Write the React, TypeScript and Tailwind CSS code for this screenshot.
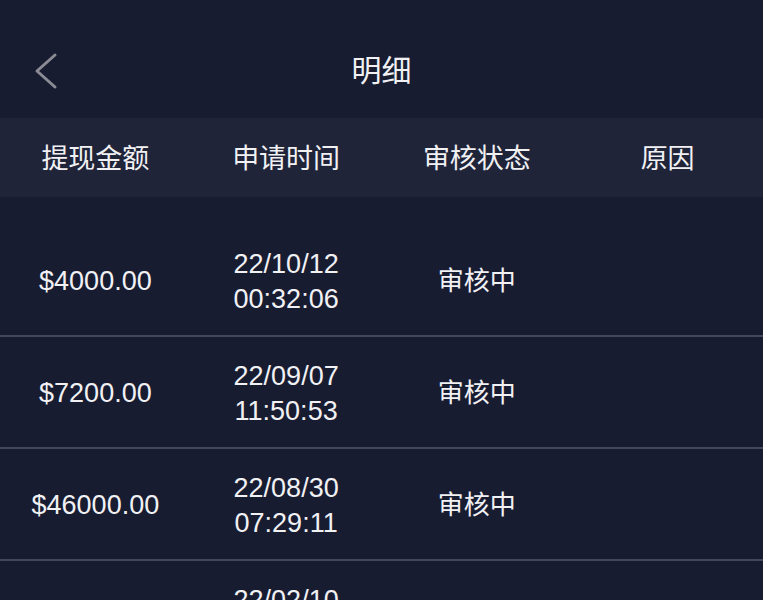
const rows = [
  { amount: '$4000.00', date: '22/10/12', time: '00:32:06', status: '审核中' },
  { amount: '$7200.00', date: '22/09/07', time: '11:50:53', status: '审核中' },
  { amount: '$46000.00', date: '22/08/30', time: '07:29:11', status: '审核中' },
  { amount: '$3000.00', date: '22/02/10', time: '09:15:40', status: '审核中' },
]

export default function App() {
  return (
    <div className="min-h-screen h-[600px] overflow-hidden bg-[#181c31] text-[#f1f1f4] font-['Liberation_Sans','Noto_Sans_CJK_SC',sans-serif]">
      {/* Nav bar */}
      <div className="relative h-[118px] flex items-center justify-center">
        <button className="absolute left-[30px] top-[50px] w-[30px] h-[42px] flex items-center justify-center">
          <svg width="26" height="38" viewBox="0 0 26 38" fill="none">
            <path d="M23 3 L5 19 L23 35" stroke="#8a8b95" strokeWidth="3" strokeLinecap="round" strokeLinejoin="round" />
          </svg>
        </button>
        <h1 className="text-[30px] leading-none font-normal mt-[24px]">明细</h1>
      </div>

      {/* Column headers */}
      <div className="grid grid-cols-4 h-[79px] items-center bg-[#1f2439] text-[27px] text-center pt-[4px]">
        <div>提现金额</div>
        <div>申请时间</div>
        <div>审核状态</div>
        <div>原因</div>
      </div>

      {/* Rows */}
      <div className="mt-[28px]">
        {rows.map((r) => (
          <div key={r.date} className="grid grid-cols-4 h-[112px] items-center text-center border-b-2 border-[#45475c] pt-[3px]">
            <div className="text-[27px]">{r.amount}</div>
            <div className="text-[27px] leading-[35px]">
              <div>{r.date}</div>
              <div>{r.time}</div>
            </div>
            <div className="text-[26px]">{r.status}</div>
            <div />
          </div>
        ))}
      </div>
    </div>
  )
}
